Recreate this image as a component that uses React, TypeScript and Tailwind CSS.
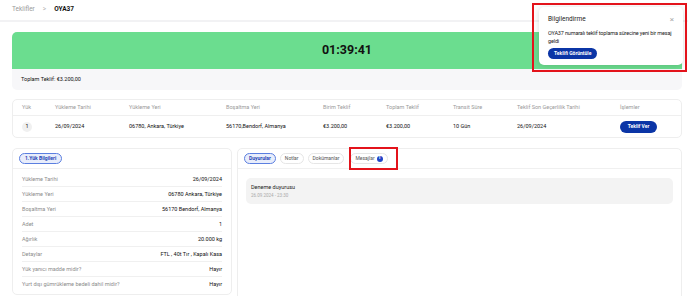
import React from 'react';

const rows: { label: string; value: string }[] = [
  { label: 'Yükleme Tarihi', value: '26/09/2024' },
  { label: 'Yükleme Yeri', value: '06780 Ankara, Türkiye' },
  { label: 'Boşaltma Yeri', value: '56170 Bendorf, Almanya' },
  { label: 'Adet', value: '1' },
  { label: 'Ağırlık', value: '20.000 kg' },
  { label: 'Detaylar', value: 'FTL , 40t Tır , Kapalı Kasa' },
  { label: 'Yük yanıcı madde midir?', value: 'Hayır' },
  { label: 'Yurt dışı gümrükleme bedeli dahil midir?', value: 'Hayır' },
];

const cols = 'grid grid-cols-[33px_74px_97px_97px_63px_67px_64px_103px_1fr] items-center';

const pill = 'h-[11px] px-[4px] inline-flex items-center whitespace-nowrap rounded-full border';

export default function App() {
  return (
    <div className="relative w-[688px] h-[296px] overflow-hidden bg-white font-['Roboto',sans-serif] text-[#222]">
      {/* breadcrumb */}
      <div className="h-[22px] flex items-center gap-[6px] px-3 border-b-2 border-[#f2f2f4] text-[6.5px]">
        <span className="text-[#9a9a9a]">Teklifler</span>
        <span className="text-[#b5b5b5] px-[2px]">&gt;</span>
        <span className="font-bold text-[#111]">OYA37</span>
      </div>

      <div className="pl-3 pr-[6px] pt-[10px] flex flex-col">
        {/* timer card */}
        <div className="rounded-[5px] overflow-hidden bg-[#f7f7f9]">
          <div className="h-[37px] bg-[#6bdd8f] flex items-center justify-center">
            <span className="text-[12.5px] font-bold text-[#111]">01:39:41</span>
          </div>
          <div className="h-[21px] flex items-center px-[9px] text-[5.5px] text-[#111]">
            Toplam Teklif: €3.200,00
          </div>
        </div>

        {/* offers table */}
        <div className="mt-[9px] rounded-[5px] border border-[#eeeeee] text-[5.5px]">
          <div className={`${cols} h-[16px] text-[#9a9a9a] border-b border-[#efefef] pl-[9px]`}>
            <span>Yük</span>
            <span>Yükleme Tarihi</span>
            <span>Yükleme Yeri</span>
            <span>Boşaltma Yeri</span>
            <span>Birim Teklif</span>
            <span>Toplam Teklif</span>
            <span>Transit Süre</span>
            <span>Teklif Son Geçerlilik Tarihi</span>
            <span>İşlemler</span>
          </div>
          <div className={`${cols} h-[21px] pl-[9px] text-[#111]`}>
            <span className="w-[10px] h-[10px] rounded-full bg-[#f0f0f0] flex items-center justify-center">1</span>
            <span>26/09/2024</span>
            <span>06780, Ankara, Türkiye</span>
            <span>56170,Bendorf, Almanya</span>
            <span>€3.200,00</span>
            <span>€3.200,00</span>
            <span>10 Gün</span>
            <span>26/09/2024</span>
            <span>
              <button className="h-[12px] w-[37px] rounded-full bg-[#0b35a6] text-white font-bold text-[5px]">
                Teklif Ver
              </button>
            </span>
          </div>
        </div>

        {/* bottom */}
        <div className="mt-[10px] grid grid-cols-[220px_1fr] gap-[5px] items-start">
          <div className="rounded-[5px] border border-[#eeeeee] text-[5.5px] pb-[2px]">
            <div className="h-[20px] flex items-center px-[6px] border-b border-[#f0f0f0]">
              <span className={`${pill} px-[5px] border-[#5b7fe0] bg-[#e8edfb] text-[#1f45b5] font-bold text-[5px]`}>
                1.Yük Bilgileri
              </span>
            </div>
            <div className="px-[9px] pt-[3px]">
              {rows.map((r, i) => (
                <div
                  key={r.label}
                  className={`h-[15px] flex items-center justify-between ${i < rows.length - 1 ? 'border-b border-[#f0f0f0]' : ''}`}
                >
                  <span className="text-[#8c8c8c]">{r.label}</span>
                  <span className="text-[#111]">{r.value}</span>
                </div>
              ))}
            </div>
          </div>

          <div className="h-[160px] rounded-[5px] border border-[#eeeeee] text-[5px]">
            <div className="h-[20px] flex items-center gap-[4px] px-[6px] border-b border-[#f0f0f0]">
              <span className={`${pill} border-[#5b7fe0] bg-[#e8edfb] text-[#1f45b5] font-bold`}>Duyurular</span>
              <span className={`${pill} border-[#e6e6e6] text-[#555]`}>Notlar</span>
              <span className={`${pill} border-[#e6e6e6] text-[#555]`}>Dokümanlar</span>
              <span className={`${pill} ml-[2px] gap-[2px] border-[#e6e6e6] text-[#555]`}>
                <span>Mesajlar</span>
                <span className="w-[6px] h-[6px] shrink-0 rounded-full bg-[#1f45c8] text-white text-[4.5px] font-bold flex items-center justify-center">
                  1
                </span>
              </span>
            </div>
            <div className="px-[8px] pt-[9px]">
              <div className="h-[26px] rounded-[5px] bg-[#f3f3f3] px-[5px] flex flex-col justify-center gap-[2px]">
                <span className="text-[5.5px] text-[#222]">Deneme duyurusu</span>
                <span className="text-[4.5px] text-[#aaa]">26.09.2024 - 23:30</span>
              </div>
            </div>
          </div>
        </div>
      </div>

      {/* notification toast */}
      <div className="absolute left-[539px] top-[7px] w-[144px] h-[58px] rounded-[5px] bg-white shadow-[0_1px_6px_rgba(0,0,0,0.15)] pl-[9px] pr-[4px] pt-[8px] text-[5.5px]">
        <div className="flex items-center justify-between">
          <span className="text-[6.5px] text-[#222]">Bilgilendirme</span>
          <span className="mr-[5px] text-[#aaa] text-[8px] leading-none">×</span>
        </div>
        <p className="mt-[4px] leading-[8.5px] text-[#222] tracking-[-0.15px]">
          OYA37 numaralı teklif toplama sürecine yeni bir mesaj geldi
        </p>
        <button className="mt-[2px] h-[11px] px-[6px] rounded-full bg-[#0b35a6] text-white font-bold text-[5px]">
          Teklifi Görüntüle
        </button>
      </div>

      {/* annotation boxes */}
      <div className="absolute left-[532px] top-[3px] w-[155px] h-[69px] border-2 border-[#e3131b] pointer-events-none" />
      <div className="absolute left-[349px] top-[147px] w-[49px] h-[23px] border-2 border-[#e3131b] pointer-events-none" />
    </div>
  );
}
